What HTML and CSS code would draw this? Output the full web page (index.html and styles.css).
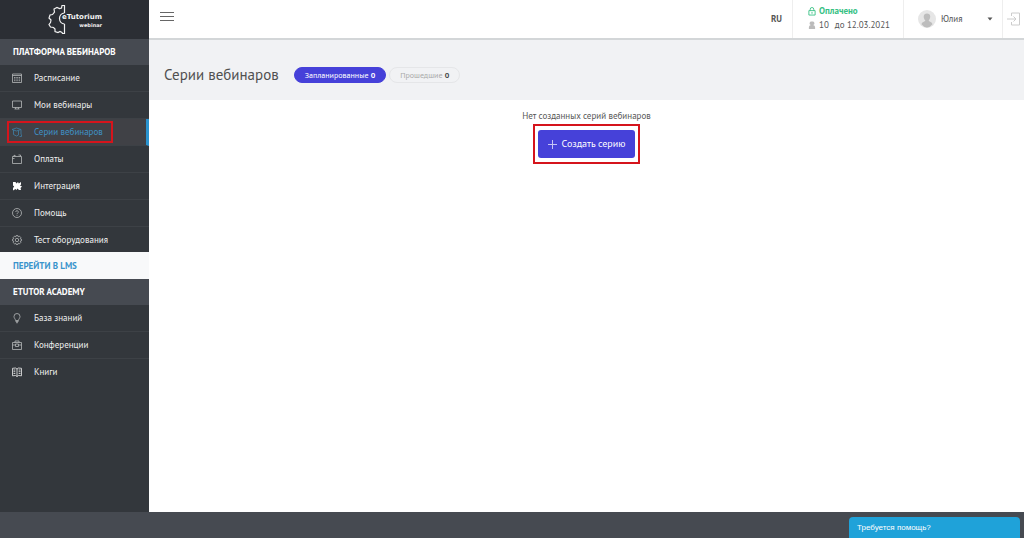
FILE: index.html
```html
<!DOCTYPE html>
<html lang="ru">
<head>
<meta charset="utf-8">
<title>Серии вебинаров</title>
<link rel="stylesheet" href="styles.css">
</head>
<body>
<div class="shell">
  <aside class="sidebar">
    <a class="brand" href="#" aria-label="eTutorium webinar">
      <svg class="brand-gear" viewBox="0 0 18 30" fill="none" stroke="currentColor" stroke-width="1.2"><path d="M16.500 9V1.500h-2.500l-.5 2.500-2 .5L9 3.500 6 5l.5 3L4.500 10.500 2 11l-1 3 2 2-.5 2.500L1 20.500 2.500 23l3 .5 1.500 1.500v2.500l3 1 2-1 2 1 .5 1h2V20"/><path d="M16.500 9a5.500 5.500 0 0 0-5 5.500 5.500 5.500 0 0 0 5 5.500"/></svg>
      <span class="brand-name"><b>eTutorium</b><small>webinar</small></span>
    </a>
    <nav>
      <h2 class="section">ПЛАТФОРМА ВЕБИНАРОВ</h2>
      <ul class="menu">
        <li><a href="#"><svg viewBox="0 0 12 12"><path d="M1.500 2h9v8.500h-9zM1.500 3.500h9M3 5.500h1.500M5.300 5.500h1.500M7.600 5.500h1.500M3 7h1.500M5.300 7h1.500M7.600 7h1.500M3 8.700h1.500M5.300 8.700h1.500M7.600 8.700h1.500"/></svg>Расписание</a></li>
        <li><a href="#"><svg viewBox="0 0 12 12"><path d="M1.500 2h9v6.500h-9zM4.500 8.500v1.500M7.500 8.500v1.500M3.500 10h5"/></svg>Мои вебинары</a></li>
        <li class="current"><a href="#" aria-current="page"><svg viewBox="0 0 12 12"><path d="M1 3.500 5.500 2 10 3.500 5.500 5zM2.500 4v4.500L5.500 10 7.500 9V4.500M10 3.500v5M8.500 10.500h2V8.500"/></svg><span>Серии вебинаров</span></a></li>
        <li><a href="#"><svg viewBox="0 0 12 12"><path d="M1.500 3.500h9v7h-9zM2 3.500l2-1.500v1.500M7.500 2h2v1.500M1.500 5.500h2"/></svg>Оплаты</a></li>
        <li><a href="#"><svg class="solid" viewBox="0 0 12 12"><path d="M2 2h2.500l1 1.500L7 2l.8 1.500L10 2v2.500l-1 1L11 6.500 9.500 8l.5 2H8L6.500 8.500 5.500 10 4.500 9 2 10.500V8l1.200-1.500L2 5.500z"/></svg>Интеграция</a></li>
        <li><a href="#"><svg viewBox="0 0 12 12"><circle cx="6" cy="6" r="4.500"/><path d="M4.700 5a1.300 1.300 0 1 1 1.800 1.200Q6 6.500 6 7.200M6 8.200v.8"/></svg>Помощь</a></li>
        <li><a href="#"><svg viewBox="0 0 12 12"><circle cx="6" cy="6" r="1.700"/><path d="m5.200 1.500-.4 1.300-1.300-.6-1.300 1.300.6 1.300-1.300.4v1.600l1.300.4-.6 1.300 1.300 1.300 1.300-.6.4 1.300h1.600l.4-1.300 1.300.6 1.300-1.300-.6-1.300 1.300-.4V5.200l-1.300-.4.6-1.300-1.300-1.300-1.300.6-.4-1.300z"/></svg>Тест оборудования</a></li>
      </ul>
      <a class="lms" href="#">ПЕРЕЙТИ В LMS</a>
      <h2 class="section">ETUTOR ACADEMY</h2>
      <ul class="menu">
        <li><a href="#"><svg viewBox="0 0 12 12"><path d="M4.500 8.500C4.500 7 3 6.300 3 4.500a3 3 0 0 1 6 0C9 6.300 7.500 7 7.500 8.500zM4.500 9.500h3M5 10.700h2"/></svg>База знаний</a></li>
        <li><a href="#"><svg viewBox="0 0 12 12"><path d="M1.500 3.500h9v7h-9zM4 3.500V2h4v1.500M1.500 6h3M7.500 6h3M4.500 5h3v2.500h-3z"/></svg>Конференции</a></li>
        <li><a href="#"><svg class="book" viewBox="0 0 12 12"><path d="M6 3 4.500 2l-3 .3v7.500l3-.3L6 10.500l1.500-1 3 .3V2.300l-3-.3zM6 3v7.500M2.500 4h1.800M2.500 5.700h1.800M2.500 7.500h1.800M7.700 4h1.800M7.700 5.700h1.800M7.700 7.500h1.800"/></svg>Книги</a></li>
      </ul>
    </nav>
  </aside>
  <div class="content">
    <header class="topbar">
      <button class="burger" aria-label="Меню"><i></i><i></i><i></i></button>
      <button class="lang">RU</button>
      <div class="plan">
        <div class="paid"><svg viewBox="0 0 9 10"><path d="M1 4h7v5H1zM2.500 4V2.500a2 2 0 0 1 4 0V4M4.500 5.500v2"/></svg>Оплачено</div>
        <div class="until"><svg viewBox="0 0 9 10"><path d="M4.500.5a2 2 0 0 1 1.200 4Q8 5 8 7v2H1V7q0-2 2.300-2.500a2 2 0 0 1 1.200-4z"/></svg><span>10</span><span>до 12.03.2021</span></div>
      </div>
      <button class="user">
        <svg class="avatar" viewBox="0 0 18 18"><circle cx="9" cy="9" r="9" fill="#e6e6e6"/><path d="M9 3.500c4 0 4 4.500 1.700 7 .2 1.300 3.300 1.200 3.800 3.800Q12 17.500 9 17.500t-5.500-3.200c.5-2.600 3.600-2.500 3.800-3.800C5 8 5 3.500 9 3.500z" fill="#bdbdbd"/></svg>
        <span>Юлия</span>
        <svg class="caret" viewBox="0 0 6 4"><path d="M.5.500h5L3 3.500z" fill="#555"/></svg>
      </button>
      <button class="exit" aria-label="Выйти"><svg viewBox="0 0 14 14"><path d="M4.500 4V1h8v12h-8v-3M0 7h9M6.500 4.500 9 7 6.500 9.500"/></svg></button>
    </header>
    <div class="titlebar">
      <h1>Серии вебинаров</h1>
      <div class="tabs">
        <button class="tab active">Запланированные <b>0</b></button>
        <button class="tab">Прошедшие <b>0</b></button>
      </div>
    </div>
    <main class="empty">
      <p>Нет созданных серий вебинаров</p>
      <div class="marked"><button class="create"><svg viewBox="0 0 9 9"><path d="M4.500 0v9M0 4.500h9"/></svg>Создать серию</button></div>
    </main>
  </div>
</div>
<footer class="footer"></footer>
<button class="help">Требуется помощь?</button>
</body>
</html>
```
FILE: styles.css
```css
* { box-sizing: border-box; }
body {
  margin: 0;
  min-height: 100vh;
  display: flex;
  flex-direction: column;
  background: #fff;
  color: #555;
  font: 9px/12px "PT Sans", "Noto Sans", sans-serif;
}
a { color: inherit; text-decoration: none; }
button { margin: 0; padding: 0; border: 0; background: none; color: inherit; font: inherit; cursor: pointer; }
h1, h2, p, ul { margin: 0; padding: 0; }
ul { list-style: none; }
svg { fill: none; stroke: currentColor; flex: none; }

.shell { flex: 1; display: flex; }
.sidebar { width: 149px; flex: none; background: #33373c; color: #f1f1f1; }
.brand { display: flex; height: 39px; padding: 4px 0 0 48px; background: #2b2e34; }
.brand-gear { width: 18px; height: 30px; }
.brand-name { display: flex; flex-direction: column; margin: 9px 0 0 -4px; }
.brand-name b { font: bold 7px/9px "DejaVu Sans", sans-serif; }
.brand-name small { font: bold 5px/6px "DejaVu Sans", sans-serif; text-align: right; }
.section { padding: 0 13px; background: #464a51; color: #fff; font-size: 9px; line-height: 26px; white-space: nowrap; }
.menu li { border-bottom: 1px solid #3d4146; }
.menu li:last-child { border-bottom: 0; }
.menu + .lms { margin-top: -1px; }
.menu a { display: flex; align-items: center; height: 26px; padding-left: 11px; gap: 11px; white-space: nowrap; }
.menu svg { width: 12px; height: 12px; stroke: #b5b7b9; stroke-width: 0.8; }
.menu .solid { fill: #fff; stroke: none; }
.menu .book { stroke: #eee; }
.menu .current { background: #404146; border-right: 3px solid #2a93cf; color: #3f92c6; }
.menu .current svg { stroke: #3f80a8; }
.current a { position: relative; }
.current a::after { content: ""; position: absolute; inset: 2px 33px 2px 7px; border: 2px solid #d5141c; }
.lms { position: relative; display: block; padding: 0 13px; background: #f8f9fa; color: #3a94cc; font-weight: bold; line-height: 27px; }

.content { flex: 1; min-width: 0; }
.topbar { display: flex; align-items: stretch; height: 40px; border-bottom: 2px solid #d3d6d8; }
.burger { display: flex; flex-direction: column; gap: 3px; margin: 12px auto 0 11px; align-self: flex-start; }
.burger i { width: 14px; height: 1px; background: #666; }
.lang { padding: 0 10px; font-weight: bold; }
.plan { display: flex; flex-direction: column; gap: 2px; width: 111px; padding: 5px 0 0 15px; border-left: 1px solid #eee; }
.plan div { display: flex; align-items: center; }
.plan svg { width: 8px; height: 9px; margin-right: 3px; }
.paid { color: #37c184; font-weight: bold; }
.until svg { fill: #bbb; stroke: none; }
.until span + span { margin-left: 6px; }
.user { display: flex; align-items: center; width: 100px; padding: 0 9px 0 14px; border: solid #eee; border-width: 0 1px; }
.avatar { width: 18px; height: 18px; margin-right: 5px; stroke: none; }
.caret { width: 6px; height: 4px; margin-left: auto; stroke: none; }
.exit { width: 21px; color: #ccc; }
.exit svg { display: block; width: 14px; height: 14px; margin-left: 4px; }

.titlebar { display: flex; align-items: center; gap: 15px; height: 60px; padding: 10px 15px 0; background: #f1f2f4; }
h1 { color: #505050; font-size: 15px; font-weight: normal; line-height: 20px; }
.tabs { display: flex; gap: 3px; }
.tab { height: 16px; padding: 0 10px; border: 1px solid #e5e6e8; border-radius: 8px; color: #aaa; font-size: 8px; line-height: 14px; }
.tab b { color: #444; }
.tab.active, .tab.active b { color: #fff; }
.tab.active { background: #4641d9; border-color: #4641d9; }

.empty { display: flex; flex-direction: column; align-items: center; gap: 2px; padding-top: 10px; }
.marked { padding: 4px 3px; border: 2px solid #d5141c; }
.create { display: flex; align-items: center; gap: 5px; height: 28px; padding: 0 10px; border-radius: 3px; background: #4641d9; color: #fff; font-size: 10px; }
.create svg { width: 9px; height: 9px; stroke: #c5c3f5; }

.footer { height: 26px; background: #464a51; }
.help { position: fixed; right: 4px; bottom: 0; width: 171px; height: 21px; padding-left: 8px; border-radius: 4px 4px 0 0; background: #1fa2d9; color: #fff; font-family: "Liberation Sans", sans-serif; font-size: 8px; text-align: left; }
```
